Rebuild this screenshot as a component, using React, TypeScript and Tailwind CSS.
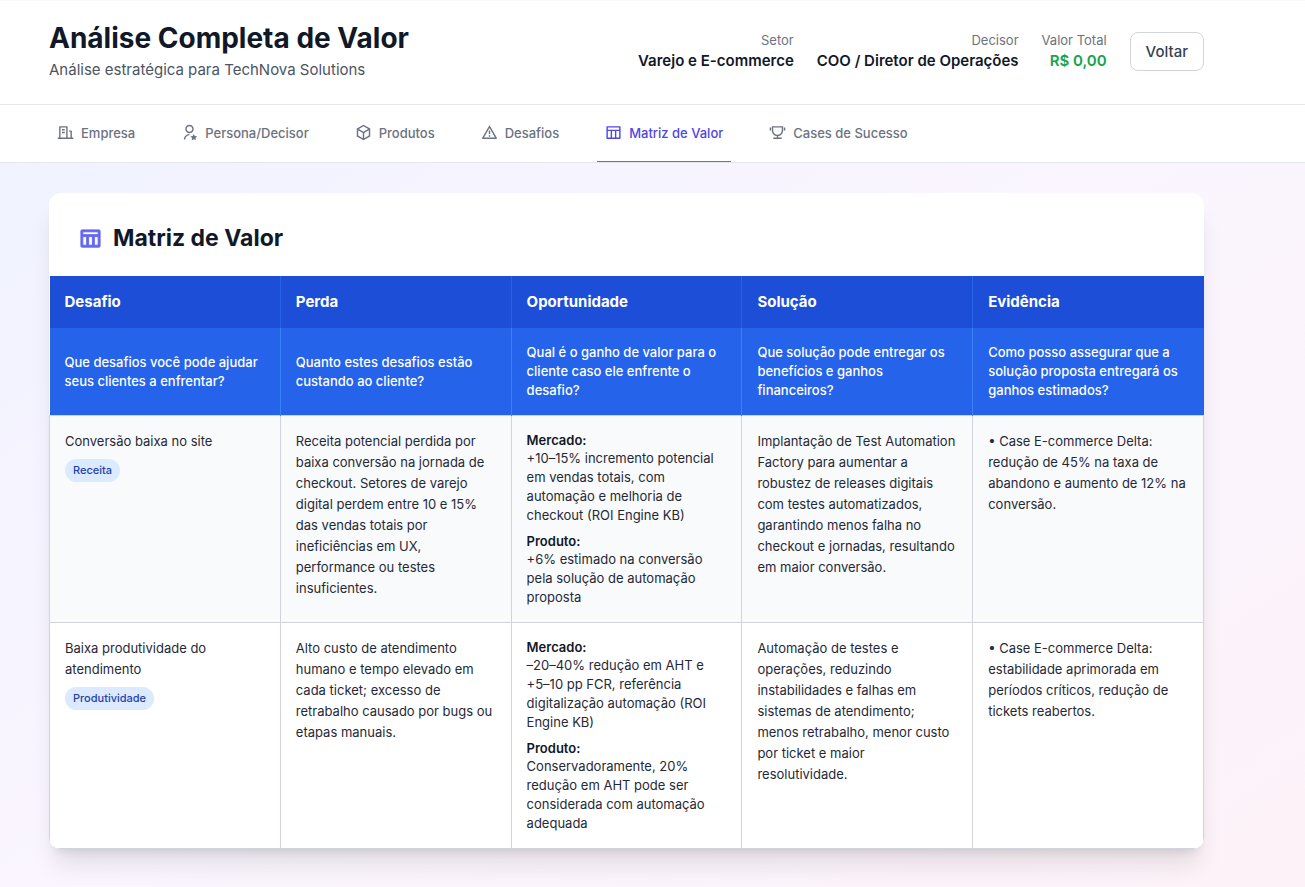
import React from 'react';
import {
  RiAlertLine,
  RiBox3Line,
  RiBuildingLine,
  RiTableLine,
  RiTrophyLine,
  RiUserStarLine,
} from 'react-icons/ri';
import type { IconType } from 'react-icons';

// Types
interface Tab {
  label: string;
  icon: IconType;
}

interface HeaderInfo {
  label: string;
  value: string;
  highlight?: boolean;
}

interface MatrixRow {
  challenge: string;
  category: string;
  loss: string;
  market: string;
  product: string;
  solution: string;
  evidence: string;
}

const headerInfo: HeaderInfo[] = [
  { label: 'Setor', value: 'Varejo e E-commerce' },
  { label: 'Decisor', value: 'COO / Diretor de Operações' },
  { label: 'Valor Total', value: 'R$ 0,00', highlight: true },
];

const tabs: Tab[] = [
  { label: 'Empresa', icon: RiBuildingLine },
  { label: 'Persona/Decisor', icon: RiUserStarLine },
  { label: 'Produtos', icon: RiBox3Line },
  { label: 'Desafios', icon: RiAlertLine },
  { label: 'Matriz de Valor', icon: RiTableLine },
  { label: 'Cases de Sucesso', icon: RiTrophyLine },
];

const columns = [
  { title: 'Desafio', question: 'Que desafios você pode ajudar seus clientes a enfrentar?' },
  { title: 'Perda', question: 'Quanto estes desafios estão custando ao cliente?' },
  { title: 'Oportunidade', question: 'Qual é o ganho de valor para o cliente caso ele enfrente o desafio?' },
  { title: 'Solução', question: 'Que solução pode entregar os benefícios e ganhos financeiros?' },
  { title: 'Evidência', question: 'Como posso assegurar que a solução proposta entregará os ganhos estimados?' },
];

const rows: MatrixRow[] = [
  {
    challenge: 'Conversão baixa no site',
    category: 'Receita',
    loss: 'Receita potencial perdida por baixa conversão na jornada de checkout. Setores de varejo digital perdem entre 10 e 15% das vendas totais por ineficiências em UX, performance ou testes insuficientes.',
    market: '+10–15% incremento potencial em vendas totais, com automação e melhoria de checkout (ROI Engine KB)',
    product: '+6% estimado na conversão pela solução de automação proposta',
    solution: 'Implantação de Test Automation Factory para aumentar a robustez de releases digitais com testes automatizados, garantindo menos falha no checkout e jornadas, resultando em maior conversão.',
    evidence: '• Case E-commerce Delta: redução de 45% na taxa de abandono e aumento de 12% na conversão.',
  },
  {
    challenge: 'Baixa produtividade do atendimento',
    category: 'Produtividade',
    loss: 'Alto custo de atendimento humano e tempo elevado em cada ticket; excesso de retrabalho causado por bugs ou etapas manuais.',
    market: '–20–40% redução em AHT e +5–10 pp FCR, referência digitalização automação (ROI Engine KB)',
    product: 'Conservadoramente, 20% redução em AHT pode ser considerada com automação adequada',
    solution: 'Automação de testes e operações, reduzindo instabilidades e falhas em sistemas de atendimento; menos retrabalho, menor custo por ticket e maior resolutividade.',
    evidence: '• Case E-commerce Delta: estabilidade aprimorada em períodos críticos, redução de tickets reabertos.',
  },
];

const Header: React.FC = () => (
  <header className="border-t border-b border-t-[#f9fafb] border-b-[#e5e7eb] bg-white">
    <div className="mx-auto flex max-w-[1207px] items-center justify-between pt-[19px] pr-[52px] pb-[22px]">
      <div className="pb-px">
        <h1 className="text-[28px] leading-9 font-bold text-[#111827]">Análise Completa de Valor</h1>
        <p className="mt-[3px] text-[15px] leading-[22px] text-[#4b5563]">
          Análise estratégica para TechNova Solutions
        </p>
      </div>
      <div className="flex items-center gap-[23px]">
        {headerInfo.map((info) => (
          <div key={info.label} className="text-right">
            <p className="text-[13px] leading-[19px] text-[#6b7280]">{info.label}</p>
            <p className={`text-[15px] leading-[22px] font-semibold ${info.highlight ? 'text-[#16a34a]' : 'text-[#111827]'}`}>
              {info.value}
            </p>
          </div>
        ))}
        <button className="cursor-pointer rounded-lg border border-[#d1d5db] px-[15px] py-2 text-[15px] leading-[21px] font-medium text-[#374151] hover:bg-[#f9fafb]">
          Voltar
        </button>
      </div>
    </div>
  </header>
);

const TabBar: React.FC<{ active: string }> = ({ active }) => (
  <nav className="border-b border-[#e5e7eb] bg-white">
    <div className="mx-auto flex max-w-[1207px] gap-[30px] pr-[52px]">
      {tabs.map(({ label, icon: Icon }) => (
        <button
          key={label}
          className={`flex cursor-pointer items-start border-b px-[8px] pt-[19px] pb-[18px] text-[13px] leading-[19px] font-medium ${
            active === label ? 'border-[#6366f1] text-[#4f46e5]' : 'border-transparent text-[#6b7280]'
          }`}
        >
          <Icon className="mr-[7px] size-[17px]" />
          {label}
        </button>
      ))}
    </div>
  </nav>
);

const Opportunity: React.FC<{ market: string; product: string }> = ({ market, product }) => (
  <div className="space-y-[7px] leading-[19px]">
    <div>
      <strong className="block leading-[18px] font-semibold text-[#111827]">Mercado:</strong>
      {market}
    </div>
    <div>
      <strong className="block leading-[18px] font-semibold text-[#111827]">Produto:</strong>
      {product}
    </div>
  </div>
);

const ValueMatrix: React.FC = () => (
  <table className="w-full table-fixed border-collapse text-[13px] text-[#1f2937]">
    <thead>
      <tr className="bg-[#1d4ed8]">
        {columns.map((col) => (
          <th
            key={col.title}
            scope="col"
            className="border-r border-[#2563eb] px-[15px] py-[15px] text-left text-[15px] leading-[22px] font-bold text-white last:border-r-0"
          >
            {col.title}
          </th>
        ))}
      </tr>
      <tr className="bg-[#2563eb]">
        {columns.map((col) => (
          <td
            key={col.title}
            className="border-r border-[#3b82f6] px-[15px] py-[15px] text-left align-middle leading-[19px] font-medium text-white last:border-r-0"
          >
            {col.question}
          </td>
        ))}
      </tr>
    </thead>
    <tbody>
      {rows.map((row) => (
        <tr key={row.challenge} className="align-top odd:bg-[#f9fafb] even:bg-white">
          <td className="border border-[#d1d5db] p-[15px] leading-[21px]">
            <p>{row.challenge}</p>
            <span className="mt-[7px] inline-block rounded-full bg-[#dbeafe] px-2 py-1 text-[11px] leading-[15px] font-medium text-[#1e40af]">
              {row.category}
            </span>
          </td>
          <td className="border border-[#d1d5db] p-[15px] leading-[21px]">{row.loss}</td>
          <td className="border border-[#d1d5db] p-[15px]">
            <Opportunity market={row.market} product={row.product} />
          </td>
          <td className="border border-[#d1d5db] p-[15px] leading-[21px]">{row.solution}</td>
          <td className="border border-[#d1d5db] p-[15px] leading-[21px]">{row.evidence}</td>
        </tr>
      ))}
    </tbody>
  </table>
);

const App: React.FC = () => {
  return (
    <div className="min-h-screen bg-linear-to-br from-[#eef2ff] via-[#faf5ff] to-[#fdf2f8] font-['Inter',sans-serif]">
      <Header />
      <TabBar active="Matriz de Valor" />
      <main className="mx-auto max-w-[1207px] pt-[30px] pr-[52px] pb-[38px]">
        <section className="overflow-hidden rounded-xl bg-white shadow-xl">
          <h2 className="flex items-center px-[30px] pt-[30px] pb-[23px] text-[23px] leading-[30px] font-bold text-[#111827]">
            <RiTableLine className="mr-[11px] size-[23px] stroke-1 text-[#6366f1]" />
            Matriz de Valor
          </h2>
          <ValueMatrix />
        </section>
      </main>
    </div>
  );
};

export default App;
